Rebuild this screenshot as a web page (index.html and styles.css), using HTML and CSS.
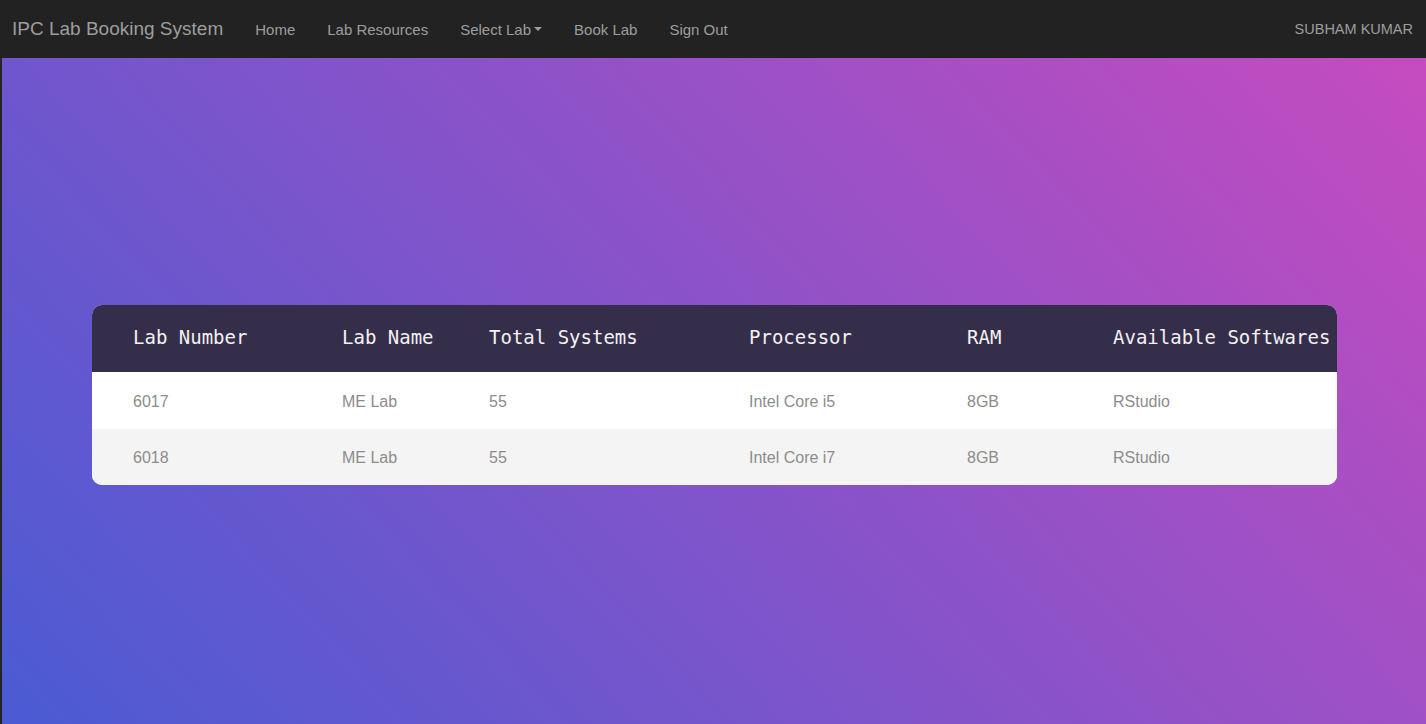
FILE: index.html
```html
<!DOCTYPE html>
<html lang="en">
<head>
<meta charset="utf-8">
<title>IPC Lab Booking System</title>
<link rel="stylesheet" href="styles.css">
</head>
<body>
<nav class="navbar">
  <a class="brand" href="#">IPC Lab Booking System</a>
  <ul class="nav">
    <li><a href="#">Home</a></li>
    <li><a href="#">Lab Resources</a></li>
    <li><a href="#">Select Lab<span class="caret"></span></a></li>
    <li><a href="#">Book Lab</a></li>
    <li><a href="#">Sign Out</a></li>
  </ul>
  <div class="user">SUBHAM KUMAR</div>
</nav>
<main class="main">
  <div class="table">
    <div class="row head">
      <div>Lab Number</div>
      <div>Lab Name</div>
      <div>Total Systems</div>
      <div>Processor</div>
      <div>RAM</div>
      <div>Available Softwares</div>
    </div>
    <div class="row">
      <div>6017</div>
      <div>ME Lab</div>
      <div>55</div>
      <div>Intel Core i5</div>
      <div>8GB</div>
      <div>RStudio</div>
    </div>
    <div class="row alt">
      <div>6018</div>
      <div>ME Lab</div>
      <div>55</div>
      <div>Intel Core i7</div>
      <div>8GB</div>
      <div>RStudio</div>
    </div>
  </div>
</main>
</body>
</html>
```
FILE: styles.css
```css
* { box-sizing: border-box; }
html, body { margin: 0; padding: 0; height: 100%; }
body {
  font-family: "Liberation Sans", Arial, sans-serif;
  background: #222;
  display: flex;
  flex-direction: column;
}
.navbar {
  height: 58px;
  flex: 0 0 58px;
  background: #222222;
  display: flex;
  align-items: center;
  padding: 0 13px 0 12px;
}
.brand {
  font-size: 19px;
  color: #9d9d9d;
  text-decoration: none;
  margin-right: 16px;
}
.nav {
  list-style: none;
  margin: 0;
  padding: 0;
  display: flex;
  flex: 1;
}
.nav a {
  display: flex;
  align-items: center;
  padding: 0 16px;
  font-size: 15px;
  color: #9d9d9d;
  text-decoration: none;
}
.caret {
  display: inline-block;
  width: 0;
  height: 0;
  margin-left: 3px;
  border-top: 4px solid #9d9d9d;
  border-left: 4px solid transparent;
  border-right: 4px solid transparent;
}
.user {
  font-size: 14.5px;
  color: #9d9d9d;
}
.main {
  flex: 1;
  border-left: 2px solid #262626;
  background: linear-gradient(47deg, #4a5bd3 0%, #c54bbf 100%);
  padding-top: 247px;
}
.table {
  width: 1245px;
  margin: 0 0 0 90px;
  border-radius: 10px;
  overflow: hidden;
  background: #fff;
}
.row {
  display: grid;
  grid-template-columns: 209px 147px 260px 218px 146px 1fr;
  padding-left: 41px;
  padding-top: 2px;
  height: 57px;
  align-items: center;
  font-size: 16px;
  color: #8c8c8c;
  background: #fff;
}
.row.alt { background: #f4f4f4; height: 56px; }
.row.head {
  height: 67px;
  background: #352e4b;
  color: #f2f2f2;
  font-family: "DejaVu Sans Mono", "Liberation Mono", monospace;
  font-size: 19px;
  white-space: nowrap;
  padding-top: 0;
  padding-bottom: 4px;
}
```
